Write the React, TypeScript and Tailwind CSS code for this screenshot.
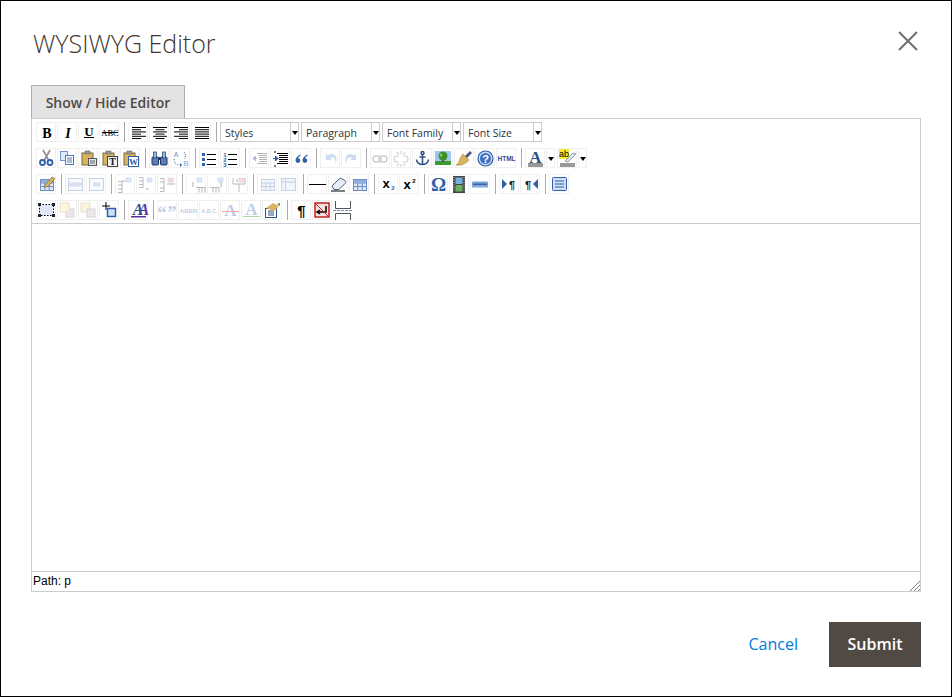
import type { ReactNode } from 'react';

const BLUE = '#2f5fa8';
const MID = '#7fa6dc';
const TAN = '#d9b45f';

const lines = (rows: [number, number][]) =>
    rows.map(([x, w], i) => <rect key={i} x={x} y={3 + i * 2.2} width={w} height="1" fill="#000" />);

const Clip = ({ children }: { children?: ReactNode }) => (
    <>
        <rect x="2" y="3" width="11" height="12" fill={TAN} stroke="#7a6a3c" />
        <rect x="5" y="1" width="5" height="3" fill="#999" stroke="#666" strokeWidth="0.6" />
        {children}
    </>
);

const Sheet = ({ x, y, w, h, fill = '#fff', stroke = '#8aa0c0' }: { x: number; y: number; w: number; h: number; fill?: string; stroke?: string }) => (
    <rect x={x + 0.5} y={y + 0.5} width={w} height={h} fill={fill} stroke={stroke} />
);

const GridTable = ({ head = true }: { head?: boolean }) => (
    <>
        <rect x="2.500" y="3.500" width="13" height="11" fill="#dfe8f6" stroke="#6d8fc4" />
        {head && <rect x="3" y="4" width="12" height="2.500" fill="#8fb0e0" />}
        <path d="M2.500 7h13M2.500 10.500h13M6.800 7v7.500M11.200 7v7.500" stroke="#6d8fc4" fill="none" />
    </>
);

const Tree = ({ a, b, red }: { a: string; b: string; red?: boolean }) => (
    <>
        <path d={a} stroke="#555" fill="none" />
        <rect x="9" y="2" width="5" height="4" fill={red ? '#f2a0a0' : '#a9c6ee'} stroke="#7a9ac8" strokeWidth="0.6" />
        <path d={b} stroke="#444" fill="none" />
    </>
);

const icons: Record<string, ReactNode> = {
    bold: <text x="9" y="13.500" textAnchor="middle" fontFamily="Liberation Serif, serif" fontWeight="700" fontSize="14" fill="#000">B</text>,
    italic: <text x="9" y="13.500" textAnchor="middle" fontFamily="Liberation Serif, serif" fontWeight="700" fontStyle="italic" fontSize="14" fill="#000">I</text>,
    underline: (
        <>
            <text x="9" y="12" textAnchor="middle" fontFamily="Liberation Serif, serif" fontWeight="700" fontSize="13" fill="#000">U</text>
            <rect x="4" y="13" width="10" height="1" fill="#000" />
        </>
    ),
    strike: (
        <>
            <text x="9" y="12" textAnchor="middle" fontFamily="Liberation Serif, serif" fontSize="8.500" fill="#000">ABC</text>
            <rect x="1" y="8" width="16" height="1" fill="#000" />
        </>
    ),
    left: lines([[2, 14], [2, 9], [2, 14], [2, 9], [2, 14], [2, 9]]),
    center: lines([[2, 14], [4.500, 9], [2, 14], [4.500, 9], [2, 14], [4.500, 9]]),
    right: lines([[2, 14], [7, 9], [2, 14], [7, 9], [2, 14], [7, 9]]),
    justify: lines([[2, 14], [2, 14], [2, 14], [2, 14], [2, 14], [2, 14]]),
    cut: (
        <>
            <path d="M5 0l5.500 10M12 0L6.500 10" stroke="#8c8c8c" strokeWidth="1.600" fill="none" />
            <circle cx="4.500" cy="12.500" r="2.500" fill="none" stroke={BLUE} strokeWidth="1.800" />
            <circle cx="12" cy="12.500" r="2.500" fill="none" stroke={BLUE} strokeWidth="1.800" />
        </>
    ),
    copy: (
        <>
            <Sheet x={1} y={1} w={7} h={9} fill="#dfeafa" stroke="#6f94cc" />
            <Sheet x={6} y={5} w={8} h={9} fill="#fff" stroke="#4f78b8" />
            <path d="M8 8h5M8 10h5M8 12h5" stroke="#4f78b8" />
        </>
    ),
    paste: (
        <Clip>
            <Sheet x={8} y={8} w={8} h={7} fill="#dde3ea" stroke="#555" />
            <path d="M10 11h5M10 13h5" stroke="#666" />
        </Clip>
    ),
    pastetext: (
        <Clip>
            <Sheet x={6} y={6} w={10} h={10} fill="#eef0f2" stroke="#444" />
            <text x="11.500" y="14.500" textAnchor="middle" fontFamily="Liberation Serif, serif" fontWeight="700" fontSize="10" fill="#222">T</text>
        </Clip>
    ),
    pasteword: (
        <Clip>
            <Sheet x={6} y={6} w={10} h={10} fill="#fff" stroke="#2f5fa8" />
            <text x="11.500" y="14.500" textAnchor="middle" fontFamily="Liberation Serif, serif" fontWeight="700" fontSize="9" fill="#2f5fa8">W</text>
        </Clip>
    ),
    find: (
        <>
            <rect x="1" y="7" width="6.500" height="8" rx="1" fill="#5b7fb6" stroke="#1f3a66" />
            <rect x="9.500" y="7" width="6.500" height="8" rx="1" fill="#5b7fb6" stroke="#1f3a66" />
            <rect x="2.500" y="2" width="3" height="6" fill="#9db6dc" stroke="#1f3a66" strokeWidth="0.700" />
            <rect x="11.500" y="2" width="3" height="6" fill="#9db6dc" stroke="#1f3a66" strokeWidth="0.700" />
            <rect x="7.500" y="7" width="2" height="3" fill="#1f3a66" />
        </>
    ),
    replace: (
        <>
            <text x="4" y="7" textAnchor="middle" fontFamily="Liberation Sans, sans-serif" fontSize="7" fill="#6d8fc4">A</text>
            <text x="14" y="16" textAnchor="middle" fontFamily="Liberation Sans, sans-serif" fontSize="8" fill={MID}>B</text>
            <path d="M2 9c0 4 2 6 6 6M12 2c2 2 1.500 5 .5 7" stroke={BLUE} strokeDasharray="1 1.300" fill="none" />
            <path d="M8 13l2 2-2 2z" fill={BLUE} />
        </>
    ),
    bullist: (
        <>
            <path d="M1 3h3v3H1zM1 8h3v3H1zM1 13h3v3H1z" fill={BLUE} />
            <path d="M6 4.500h9M6 9.500h9M6 14.500h9" stroke="#000" />
        </>
    ),
    numlist: (
        <>
            <text x="3" y="6.500" textAnchor="middle" fontFamily="Liberation Sans, sans-serif" fontWeight="700" fontSize="6" fill={BLUE}>1</text>
            <text x="3" y="11.500" textAnchor="middle" fontFamily="Liberation Sans, sans-serif" fontWeight="700" fontSize="6" fill={BLUE}>2</text>
            <text x="3" y="16.500" textAnchor="middle" fontFamily="Liberation Sans, sans-serif" fontWeight="700" fontSize="6" fill={BLUE}>3</text>
            <path d="M6 4.500h9M6 9.500h9M6 14.500h9" stroke="#000" />
        </>
    ),
    outdent: (
        <g opacity="0.4">
            <path d="M6 3.500h10M8 5.500h8M8 7.500h8M8 9.500h8M8 11.500h8M6 13.500h10" stroke="#444" />
            <path d="M6 8.500H2M2 8.500l2.500-2.500v5z" fill={BLUE} stroke={BLUE} />
        </g>
    ),
    indent: (
        <>
            <path d="M5 3.500h11M7 5.500h9M7 7.500h9M7 9.500h9M7 11.500h9M5 13.500h11" stroke="#000" />
            <path d="M1 8.500h3M6 8.500L3.500 6v5z" fill={BLUE} stroke={BLUE} />
            <path d="M3 15v2M3 1v2" stroke="#000" />
        </>
    ),
    quote: (
        <path d="M7.500 4.500C5 5.500 2.500 8 2.500 10.500a2.400 2.400 0 104.800 0 2.300 2.300 0 00-2.300-2.300c.4-.9 1.300-1.800 2.500-2.400zM14.500 4.500c-2.500 1-5 3.500-5 6a2.400 2.400 0 104.800 0 2.300 2.300 0 00-2.300-2.300c.4-.9 1.300-1.800 2.500-2.400z" fill={BLUE} />
    ),
    undo: <path d="M4 4v6h6L8 8c3-2 6 0 5.500 6 2-4 1.500-10-4-10-1 0-2.500.5-3.500 1.500z" fill={MID} />,
    redo: <path d="M13 4v6H7l2-2c-3-2-6 0-5.500 6-2-4-1.500-10 4-10 1 0 2.500.5 3.500 1.500z" fill={MID} />,
    link: (
        <g fill="none" stroke="#8a8a8a" strokeWidth="1.500">
            <rect x="1" y="6" width="8" height="6" rx="3" />
            <rect x="7" y="6" width="8" height="6" rx="3" />
        </g>
    ),
    unlink: (
        <g fill="none" stroke="#8a8a8a" strokeWidth="1.200">
            <path d="M6 6H4a3 3 0 000 6h2M10 6h2a3 3 0 010 6h-2M8 1v3M8 14v3M4 2l1.500 2.500M12 2l-1.500 2.500M4 16l1.500-2.500M12 16l-1.500-2.500" />
        </g>
    ),
    anchor: (
        <g fill="none" stroke="#2f4f7f" strokeWidth="1.500">
            <circle cx="8.500" cy="3" r="1.500" />
            <path d="M8.500 4.500v10M5.500 7h6M2.500 9.500c0 3 3 5 6 5s6-2 6-5" />
        </g>
    ),
    image: (
        <>
            <rect x="0" y="1" width="16" height="14" fill="#9fc8f0" />
            <rect x="0" y="11" width="16" height="4" fill="#3c9a2e" />
            <rect x="7" y="8" width="2" height="4" fill="#6b4a20" />
            <circle cx="8" cy="6" r="4.500" fill="#3f8f2c" />
            <circle cx="6" cy="5" r="1.500" fill="#8fc860" />
        </>
    ),
    cleanup: (
        <>
            <path d="M8 7l6-6 2 2-6 6z" fill="#4a5a78" />
            <path d="M7 4l6 6c-3 4-8 6-13 5 2-1 3-3 3-4 0 0 2-5 4-7z" fill={TAN} stroke="#a98a40" strokeWidth="0.600" />
        </>
    ),
    help: (
        <>
            <circle cx="8.500" cy="8.500" r="7.500" fill="#c8dcf6" stroke={BLUE} strokeWidth="1.200" />
            <circle cx="8.500" cy="8.500" r="5.500" fill="#3f72c4" />
            <text x="8.500" y="12.500" textAnchor="middle" fontFamily="Liberation Sans, sans-serif" fontWeight="700" fontSize="11" fill="#fff">?</text>
        </>
    ),
    html: <text x="8.500" y="11" textAnchor="middle" fontFamily="Liberation Sans, sans-serif" fontWeight="700" fontSize="6.500" fill="#2f4f96">HTML</text>,
    forecolor: (
        <>
            <text x="8.500" y="12.500" textAnchor="middle" fontFamily="Liberation Serif, serif" fontWeight="700" fontSize="17" fill="#2f4f7f">A</text>
            <rect x="1" y="13" width="15" height="4" fill="#999" />
        </>
    ),
    backcolor: (
        <>
            <rect x="0" y="-1" width="10" height="10" fill="#f6ee30" />
            <text x="5" y="7" textAnchor="middle" fontFamily="Liberation Sans, sans-serif" fontSize="9" fill="#000">ab</text>
            <path d="M6 11l8-8 3 1-8 8z" fill="#d8e2f0" stroke="#6d7f9a" strokeWidth="0.700" />
            <rect x="1" y="13" width="15" height="4" fill="#999" />
        </>
    ),
    edit: (
        <>
            <GridTable />
            <path d="M7 9l7-8 3 1.500-7 8-3.500 1z" fill={TAN} stroke="#7a5a20" strokeWidth="0.600" />
        </>
    ),
    cols1: (
        <>
            <rect x="1.500" y="2.500" width="14" height="12" fill="#eef3fb" stroke="#6d8fc4" />
            <rect x="2" y="6.500" width="13" height="4" fill="#9db6dc" />
        </>
    ),
    cols2: (
        <>
            <rect x="1.500" y="2.500" width="14" height="12" fill="#eef3fb" stroke="#6d8fc4" />
            <rect x="5" y="6.500" width="7" height="4" fill="#9db6dc" />
        </>
    ),
    treeA: <Tree a="M1 5.500h4v11H1M1 9h4M1 13h4" b="M5 5h3" />,
    treeB: <Tree a="M1 1.500h4v10H1M1 5h4M1 8.500h4" b="M8 13h3" />,
    treeC: <Tree a="M1 2.500h4v13H1M1 6h4M1 12h4" b="M8 8h8" red />,
    cellA: <Tree a="M8 11.500h9v5M11 11.500v5M14 11.500v5" b="M5 6v5" />,
    cellB: <Tree a="M1 11.500h9v5M4 11.500v5M7 11.500v5" b="M12 6v5" />,
    cellC: <Tree a="M3 2v6h12V2M9 8v8" b="M7 3v3" red />,
    tableA: <GridTable head={false} />,
    tableB: (
        <>
            <rect x="1.500" y="2.500" width="14" height="12" fill="#dfe8f6" stroke="#6d8fc4" />
            <path d="M1.500 6h14M5.500 2.500v12" stroke="#6d8fc4" />
        </>
    ),
    hr: <rect x="0" y="8" width="17" height="1" fill="#000" />,
    eraser: (
        <>
            <path d="M2 10l7-7c1-1 2-1 3 0l3 1.500c1 1 1 2 0 3l-6 6H4z" fill="#e6edf7" stroke="#4a5a78" />
            <path d="M1 15h14" stroke="#000" />
        </>
    ),
    table: <GridTable />,
    sub: (
        <>
            <text x="6" y="12" textAnchor="middle" fontFamily="Liberation Sans, sans-serif" fontWeight="700" fontSize="13" fill="#000">x</text>
            <text x="13" y="14" textAnchor="middle" fontFamily="Liberation Sans, sans-serif" fontWeight="700" fontSize="6" fill={BLUE}>2</text>
        </>
    ),
    sup: (
        <>
            <text x="6" y="13" textAnchor="middle" fontFamily="Liberation Sans, sans-serif" fontWeight="700" fontSize="13" fill="#000">x</text>
            <text x="13" y="7" textAnchor="middle" fontFamily="Liberation Sans, sans-serif" fontWeight="700" fontSize="6" fill="#000">2</text>
        </>
    ),
    omega: <text x="8.500" y="14.500" textAnchor="middle" fontFamily="Liberation Serif, serif" fontWeight="700" fontSize="19" fill={BLUE}>Ω</text>,
    media: (
        <>
            <rect x="2" y="0" width="12" height="17" fill="#444" />
            <rect x="4.500" y="1.500" width="7" height="6.500" fill="#6fb0e0" />
            <rect x="4.500" y="9" width="7" height="6.500" fill="#68b060" />
            <path d="M3 1v15M13 1v15" stroke="#ccc" strokeDasharray="1 1.500" />
        </>
    ),
    minus: (
        <>
            <rect x="0" y="5.500" width="16" height="6" fill="#7fa6dc" />
            <rect x="1" y="7.500" width="14" height="1.500" fill="#3f5f9f" />
        </>
    ),
    ltr: (
        <>
            <path d="M1 3l5 5-5 5z" fill={BLUE} />
            <text x="11" y="12.500" textAnchor="middle" fontFamily="Liberation Sans, sans-serif" fontWeight="700" fontSize="11" fill="#222">¶</text>
        </>
    ),
    rtl: (
        <>
            <path d="M16 3l-5 5 5 5z" fill={BLUE} />
            <text x="6" y="12.500" textAnchor="middle" fontFamily="Liberation Sans, sans-serif" fontWeight="700" fontSize="11" fill="#222">¶</text>
        </>
    ),
    fullscreen: (
        <>
            <rect x="1.500" y="1.500" width="14" height="13" rx="1" fill="#cfe0f6" stroke={BLUE} />
            <path d="M4 5h9M4 8h9M4 11h9" stroke={BLUE} />
        </>
    ),
    layer: (
        <>
            <rect x="1.500" y="2.500" width="14" height="11" fill="#dfe6f6" stroke="#000" strokeDasharray="1.500 1.500" />
            <path d="M0 1h3v3H0zM14 1h3v3h-3zM0 12h3v3H0zM14 12h3v3h-3z" fill="#223" />
        </>
    ),
    forward: (
        <>
            <rect x="7" y="7" width="8" height="8" fill="#c8c8c8" stroke="#999" />
            <rect x="1" y="1" width="9" height="9" fill="#f8e6a8" stroke="#c8b890" />
        </>
    ),
    backward: (
        <>
            <rect x="1" y="1" width="9" height="9" fill="#f8e6a8" stroke="#c8b890" />
            <rect x="7" y="7" width="8" height="8" fill="#c8c8c8" stroke="#999" />
        </>
    ),
    absolute: (
        <>
            <path d="M5 0v8M1 4h8" stroke="#000" />
            <rect x="6.500" y="6.500" width="8" height="8" fill="#cfe0f6" stroke={BLUE} strokeWidth="1.500" />
        </>
    ),
    styleprops: (
        <>
            <text x="8.500" y="13" textAnchor="middle" letterSpacing="-5" fontFamily="Liberation Serif, serif" fontWeight="700" fontStyle="italic" fontSize="16">
                <tspan fill="#2f4f96">A</tspan>
                <tspan fill="#5a3aa0">A</tspan>
            </text>
            <rect x="1" y="14" width="15" height="1.500" fill="#5a2aa0" />
        </>
    ),
    cite: <text x="8.500" y="17" textAnchor="middle" letterSpacing="1" fontFamily="Liberation Serif, serif" fontWeight="700" fontSize="18" fill="#5f84bc">“”</text>,
    abbr: <text x="8.500" y="10.500" textAnchor="middle" fontFamily="Liberation Sans, sans-serif" fontWeight="700" fontSize="6" fill="#5f84bc">ABBR</text>,
    acronym: <text x="8.500" y="10.500" textAnchor="middle" fontFamily="Liberation Sans, sans-serif" fontWeight="700" fontSize="5.500" fill="#5f84bc">A.B.C.</text>,
    del: (
        <>
            <text x="8.500" y="14" textAnchor="middle" fontFamily="Liberation Serif, serif" fontWeight="700" fontSize="17" fill="#5f84bc">A</text>
            <rect x="0" y="9" width="17" height="1" fill="#e02020" />
        </>
    ),
    ins: (
        <>
            <text x="8.500" y="13" textAnchor="middle" fontFamily="Liberation Serif, serif" fontWeight="700" fontSize="17" fill="#5f84bc">A</text>
            <rect x="0" y="14" width="17" height="1" fill="#30a030" />
        </>
    ),
    attribs: (
        <>
            <rect x="1.500" y="6.500" width="11" height="9" fill="#fff" stroke="#2f4f7f" />
            <path d="M4 9h6M4 11h6M4 13h6" stroke="#2f4f7f" />
            <path d="M2 6l7-5 6 3-5 5z" fill={TAN} />
            <path d="M13 2l3-1v3z" fill="#3c9a2e" />
        </>
    ),
    pilcrow: <text x="8.500" y="14" textAnchor="middle" fontFamily="Liberation Sans, sans-serif" fontWeight="700" fontSize="15" fill="#000">¶</text>,
    visualblocks: (
        <>
            <rect x="1" y="1" width="14" height="14" fill="#f8dede" stroke="#c02020" strokeWidth="1.500" />
            <path d="M12 4v6H4M6 8l-3 2 3 2" stroke="#000" strokeWidth="1.500" fill="none" />
            <path d="M2 2l12 12" stroke="#d02020" />
        </>
    ),
};

const Icon = ({ name, off }: { name: string; off?: boolean }) => (
    <span className="mr-px flex h-5 w-5 shrink-0 items-center justify-center border border-[#f0f0ee]">
        <svg viewBox="0 0 18 18" className={off ? 'h-[18px] w-[18px] translate-x-px translate-y-px overflow-visible opacity-40' : 'h-[18px] w-[18px] translate-x-px translate-y-px overflow-visible'}>
            {icons[name]}
        </svg>
    </span>
);

const Sep = () => (
    <span className="flex h-5 w-2 shrink-0 pl-1">
        <span className="h-5 w-px bg-[#a8a8a8]" />
    </span>
);

const Arrow = () => <span className="h-0 w-0 border-x-[3px] border-t-[4px] border-x-transparent border-t-black" />;

const Select = ({ label }: { label: string }) => (
    <span className="mr-0.5 flex h-5 w-[79px] shrink-0 border border-[#cccccc] text-[10.5px] text-[#2b3340] [font-family:'Open_Sans',sans-serif]">
        <span className="flex-1 truncate pl-1 leading-[20px]">{label}</span>
        <span className="flex w-[8px] items-center justify-center border-l border-[#cccccc] pt-px">
            <Arrow />
        </span>
    </span>
);

const Split = () => (
    <span className="mr-0.5 flex h-5 w-[9px] shrink-0 items-center justify-center border border-[#f0f0ee] pl-px pt-px">
        <Arrow />
    </span>
);

const Toolbar = ({ children }: { children: ReactNode }) => <div className="flex h-5 items-center">{children}</div>;

const group = (names: string[], off?: boolean) => names.map((n) => <Icon key={n} name={n} off={off} />);

export default function App() {
    return (
        <div className="flex h-[697px] w-[952px] flex-col border border-black bg-white px-[30px] text-[#514943] [font-family:'Open_Sans',sans-serif]">
            <header className="flex h-[84px] items-start justify-between pl-0.5 pt-[24px]">
                <h1 className="text-[25px] font-light leading-[36px] text-[#41362f]">WYSIWYG Editor</h1>
                <button className="mr-[3px] mt-[6px] text-[#736e69]">
                    <svg viewBox="0 0 20 20" className="h-5 w-5">
                        <path d="M1 1l18 18M19 1L1 19" stroke="currentColor" strokeWidth="2" fill="none" />
                    </svg>
                </button>
            </header>

            <div>
                <button className="h-[34px] w-[154px] border border-[#adadad] bg-[#e3e3e3] text-[14px] font-semibold">Show / Hide Editor</button>
            </div>

            <div className="-mt-px flex h-[474px] w-[890px] flex-col border border-[#cccccc]">
                <div className="flex h-[105px] flex-col gap-1.5 border-b border-[#cccccc] pl-1 pt-[3px]">
                    <Toolbar>
                        {group(['bold', 'italic', 'underline', 'strike'])}
                        <Sep />
                        {group(['left', 'center', 'right', 'justify'])}
                        <Sep />
                        <Select label="Styles" />
                        <Select label="Paragraph" />
                        <Select label="Font Family" />
                        <Select label="Font Size" />
                    </Toolbar>
                    <Toolbar>
                        {group(['cut', 'copy', 'paste', 'pastetext', 'pasteword'])}
                        <Sep />
                        {group(['find', 'replace'])}
                        <Sep />
                        {group(['bullist', 'numlist'])}
                        <Sep />
                        {group(['outdent', 'indent', 'quote'])}
                        <Sep />
                        {group(['undo', 'redo'], true)}
                        <Sep />
                        {group(['link', 'unlink'], true)}
                        {group(['anchor', 'image', 'cleanup', 'help', 'html'])}
                        <Sep />
                        <Icon name="forecolor" />
                        <Split />
                        <Icon name="backcolor" />
                        <Split />
                    </Toolbar>
                    <Toolbar>
                        <Icon name="edit" />
                        <Sep />
                        {group(['cols1', 'cols2'], true)}
                        <Sep />
                        {group(['treeA', 'treeB', 'treeC'], true)}
                        <Sep />
                        {group(['cellA', 'cellB', 'cellC'], true)}
                        <Sep />
                        {group(['tableA', 'tableB'], true)}
                        <Sep />
                        {group(['hr', 'eraser', 'table'])}
                        <Sep />
                        {group(['sub', 'sup'])}
                        <Sep />
                        {group(['omega', 'media', 'minus'])}
                        <Sep />
                        {group(['ltr', 'rtl'])}
                        <Sep />
                        <Icon name="fullscreen" />
                    </Toolbar>
                    <Toolbar>
                        <Icon name="layer" />
                        {group(['forward', 'backward'], true)}
                        <Icon name="absolute" />
                        <Sep />
                        <Icon name="styleprops" />
                        <Sep />
                        {group(['cite', 'abbr', 'acronym', 'del', 'ins'], true)}
                        <Icon name="attribs" />
                        <Sep />
                        {group(['pilcrow', 'visualblocks'])}
                        <svg viewBox="0 0 20 20" className="h-5 w-5">
                            <path d="M2.500 1v7.500h15V1M2.500 20v-6.500h15V20" stroke="#555" fill="none" />
                            <path d="M0 10.500h20" stroke="#6d8fc4" strokeDasharray="3 1" />
                        </svg>
                    </Toolbar>
                </div>
                <div className="flex-1" />
                <div className="relative h-5 border-t border-[#cccccc] pl-px text-[12px] leading-[19px] text-black [font-family:'Liberation_Sans',sans-serif]">
                    Path: p
                    <svg viewBox="0 0 10 10" className="absolute bottom-0 right-0 h-2.5 w-2.5">
                        <path d="M0 10L10 0M4 10l6-6M8 10l2-2" stroke="#777" fill="none" />
                    </svg>
                </div>
            </div>

            <footer className="flex flex-1 items-start justify-end pt-[30px]">
                <a className="mr-[31px] mt-[10px] text-[16px] leading-6 text-[#007bdb]">Cancel</a>
                <button className="h-[45px] w-[92px] bg-[#514943] pb-px text-[16px] font-semibold text-white">Submit</button>
            </footer>
        </div>
    );
}
